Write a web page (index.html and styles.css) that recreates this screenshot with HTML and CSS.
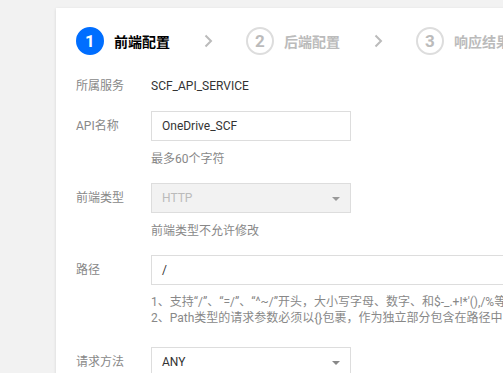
FILE: index.html
```html
<!DOCTYPE html>
<html lang="zh-CN">
<head>
  <meta charset="UTF-8" />
  <meta name="viewport" content="width=device-width, initial-scale=1.0"/>
  <title>API配置</title>
  <link rel="stylesheet" href="styles.css">
</head>
<body>
  <div class="panel">
    <div class="steps">
      <div class="step current">
        <span class="step-num">1</span>
        <span class="step-title">前端配置</span>
      </div>
      <div class="step-sep">
        <svg width="9" height="14" viewBox="0 0 9 14"><path d="M1.5 1.5 L7 7 L1.5 12.5" fill="none" stroke="#bbb" stroke-width="2"/></svg>
      </div>
      <div class="step">
        <span class="step-num">2</span>
        <span class="step-title">后端配置</span>
      </div>
      <div class="step-sep">
        <svg width="9" height="14" viewBox="0 0 9 14"><path d="M1.5 1.5 L7 7 L1.5 12.5" fill="none" stroke="#bbb" stroke-width="2"/></svg>
      </div>
      <div class="step">
        <span class="step-num">3</span>
        <span class="step-title">响应结果</span>
      </div>
    </div>

    <div class="form">
      <div class="row plain">
        <label class="label">所属服务</label>
        <div class="field"><div class="text-value">SCF_API_SERVICE</div></div>
      </div>

      <div class="row">
        <label class="label">API名称</label>
        <div class="field">
          <div class="input">OneDrive_SCF</div>
          <p class="hint">最多60个字符</p>
        </div>
      </div>

      <div class="row">
        <label class="label">前端类型</label>
        <div class="field">
          <div class="input select disabled">HTTP<span class="arrow"></span></div>
          <p class="hint">前端类型不允许修改</p>
        </div>
      </div>

      <div class="row">
        <label class="label">路径</label>
        <div class="field">
          <div class="input wide">/</div>
          <div class="help">
            <p>1、支持“/”、“=/”、“^~/”开头，大小写字母、数字、和$-_.+!*'(),/%等</p>
            <p>2、Path类型的请求参数必须以{}包裹，作为独立部分包含在路径中</p>
          </div>
        </div>
      </div>

      <div class="row">
        <label class="label">请求方法</label>
        <div class="field">
          <div class="input select">ANY<span class="arrow"></span></div>
        </div>
      </div>
    </div>
  </div>
</body>
</html>
```

FILE: styles.css
```css
body {
  margin: 0;
  background: #f2f2f2;
  font-family: Roboto, "Noto Sans CJK SC", sans-serif;
  font-size: 12px;
  color: #333;
  overflow: hidden;
}
.panel {
  margin: 8px 0 0 56px;
  width: 600px;
  height: 400px;
  background: #fff;
  box-shadow: 0 1px 3px rgba(0, 0, 0, 0.12);
  padding: 19px 0 0 20px;
  box-sizing: border-box;
}
.steps {
  display: flex;
  align-items: center;
  height: 28px;
}
.step {
  display: flex;
  align-items: center;
  gap: 10px;
}
.step-num {
  width: 28px;
  height: 28px;
  box-sizing: border-box;
  border: 2px solid #ddd;
  border-radius: 50%;
  display: flex;
  align-items: center;
  justify-content: center;
  font-size: 17px;
  font-weight: bold;
  color: #bbb;
}
.step-title {
  width: 56px;
  font-size: 14px;
  font-weight: bold;
  color: #bbb;
  white-space: nowrap;
}
.step.current .step-num {
  background: #006eff;
  border-color: #006eff;
  color: #fff;
}
.step.current .step-title {
  color: #000;
}
.step-sep {
  width: 76px;
  display: flex;
  justify-content: center;
  align-items: center;
}
.form {
  margin-top: 16px;
}
.row {
  display: flex;
  margin-bottom: 15px;
}
.row.plain {
  margin-bottom: 10px;
}
.label {
  width: 75px;
  flex-shrink: 0;
  line-height: 30px;
  color: #888;
}
.field {
  flex: 1;
  min-width: 0;
}
.text-value {
  line-height: 30px;
  color: #333;
}
.input {
  width: 200px;
  height: 30px;
  box-sizing: border-box;
  border: 1px solid #ddd;
  padding: 0 10px;
  line-height: 28px;
  color: #333;
  position: relative;
}
.input.wide {
  width: 420px;
}
.select.disabled {
  background: #f2f2f2;
  color: #bbb;
}
.arrow {
  position: absolute;
  right: 10px;
  top: 13px;
  width: 0;
  height: 0;
  border-left: 4px solid transparent;
  border-right: 4px solid transparent;
  border-top: 4px solid #888;
}
.select.disabled .arrow {
  border-top-color: #999;
}
.hint {
  margin: 9px 0 0;
  line-height: 18px;
  color: #888;
}
.help {
  margin: 9px 0 6px;
  color: #888;
  white-space: nowrap;
}
.help p {
  margin: 0;
  line-height: 16px;
}
```
